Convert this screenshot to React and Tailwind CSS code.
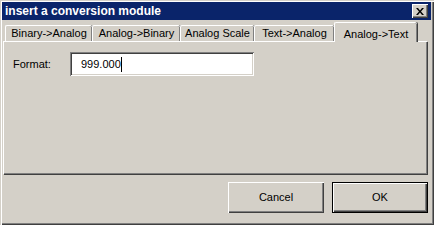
import React from "react";

const tabs = [
  { label: "Binary->Analog", w: "w-[87px]" },
  { label: "Analog->Binary", w: "w-[88px]" },
  { label: "Analog Scale", w: "w-[74px]" },
  { label: "Text->Analog", w: "w-[80px]" },
];

const raised =
  "shadow-[inset_1px_1px_#ffffff,inset_-1px_-1px_#404040,inset_-2px_-2px_#808080]";

export default function App() {
  return (
    <div
      className="w-[434px] h-[225px] bg-[#d4d0c8] pt-[2px] pl-[2px] pr-[3px] text-black text-[11px] shadow-[inset_1px_1px_#d4d0c8,inset_2px_2px_#ffffff,inset_-1px_-1px_#404040,inset_-2px_-2px_#808080]"
      style={{ fontFamily: '"Liberation Sans", Arial, sans-serif' }}
    >
      {/* Title bar */}
      <div className="h-[18px] bg-[#0a246a] flex items-center justify-between pl-[3px] pr-[3px]">
        <span className="text-white font-bold text-[12px] leading-none">insert a conversion module</span>
        <button className={`w-[16px] h-[14px] bg-[#d4d0c8] flex items-center justify-center ${raised}`}>
          <svg width="8" height="7" viewBox="0 0 8 7">
            <path d="M0 0h2l2 2.5L6 0h2L5 3.5 8 7H6L4 4.5 2 7H0l3-3.5z" fill="#000" />
          </svg>
        </button>
      </div>

      {/* Tabs */}
      <div className="ml-[1px] mt-[2px] w-[424px]">
        <div className="h-[20px] flex items-end pl-[2px] relative z-10">
          {tabs.map((t) => (
            <div
              key={t.label}
              className={`${t.w} h-[16px] mb-[1px] flex items-center justify-center rounded-t-[2px] border-t border-l border-white shadow-[inset_-1px_0_#808080,1px_0_#404040]`}
            >
              {t.label}
            </div>
          ))}
          <div className="w-[83px] h-[20px] bg-[#d4d0c8] flex items-start justify-center pt-[3px] rounded-t-[2px] border-t border-l border-white shadow-[inset_-1px_0_#808080,1px_0_#404040]">
            Analog-&gt;Text
          </div>
        </div>

        {/* Panel */}
        <div className="-mt-[1px] h-[133px] border-t border-l border-white shadow-[inset_-1px_-1px_#808080,1px_1px_#404040] pt-[10px] pl-[9px]">
          <div className="flex items-center">
            <span className="w-[57px]">Format:</span>
            <div className="w-[184px] h-[24px] bg-white flex items-center pl-[11px] shadow-[inset_1px_1px_#808080,inset_-1px_-1px_#ffffff,inset_2px_2px_#404040,inset_-2px_-2px_#d4d0c8]">
              <span>999.000</span>
              <span className="w-[1px] h-[15px] bg-black" />
            </div>
          </div>
        </div>

        {/* Buttons */}
        <div className="flex justify-end gap-[8px] mt-[8px] -mr-[1px]">
          <button className={`w-[96px] h-[31px] bg-[#d4d0c8] ${raised}`}>Cancel</button>
          <button className="w-[96px] h-[31px] bg-[#d4d0c8] shadow-[inset_0_0_0_1px_#000000,inset_2px_2px_#ffffff,inset_-2px_-2px_#404040,inset_-3px_-3px_#808080]">
            OK
          </button>
        </div>
      </div>
    </div>
  );
}
